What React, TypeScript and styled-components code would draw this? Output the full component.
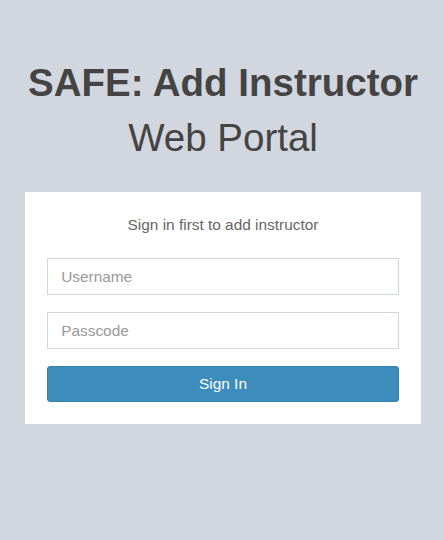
import React from "react";
import styled, { createGlobalStyle } from "styled-components";

const GlobalStyle = createGlobalStyle`
  html, body {
    margin: 0;
    padding: 0;
    background: #d2d6de;
    font-family: "Liberation Sans", Arial, Helvetica, sans-serif;
  }
  * { box-sizing: border-box; }
`;

const Page = styled.div`
  min-height: 540px;
  background: #d2d6de;
  padding: 54.5px 0 0 2px;
`;

const LoginBox = styled.div`
  width: 396px;
  margin: 0 auto;
`;

const Logo = styled.div`
  font-size: 38.5px;
  line-height: 55px;
  text-align: center;
  color: #444;
  margin-bottom: 27.5px;
  font-weight: 400;
`;

const LogoStrong = styled.b`
  font-weight: 700;
`;

const Card = styled.div`
  background: #fff;
  padding: 22px;
  color: #666;
`;

const Message = styled.p`
  margin: 0;
  padding: 0 22px 22px;
  text-align: center;
  font-size: 15.4px;
  line-height: 22px;
  color: #666;
`;

const FormGroup = styled.div`
  margin-bottom: 16.5px;
`;

const Input = styled.input`
  display: block;
  width: 100%;
  height: 37.4px;
  padding: 6.6px 13.2px;
  font-family: "Liberation Sans", Arial, Helvetica, sans-serif;
  font-size: 15.4px;
  line-height: 22px;
  color: #555;
  background: #fff;
  border: 1px solid #d2d6de;
  border-radius: 0;
  outline: none;
  &::placeholder {
    color: #999;
    opacity: 1;
  }
`;

const Button = styled.button`
  display: block;
  width: 100%;
  height: 36px;
  padding: 0 13px;
  font-family: "Liberation Sans", Arial, Helvetica, sans-serif;
  font-size: 15.4px;
  line-height: 22px;
  color: #fff;
  background: #3c8dbc;
  border: 1px solid #367fa9;
  border-radius: 3px;
  cursor: pointer;
`;

export default function App() {
  return (
    <>
      <GlobalStyle />
      <Page>
        <LoginBox>
          <Logo>
            <LogoStrong>SAFE: Add Instructor</LogoStrong>
            <br />
            Web Portal
          </Logo>
          <Card>
            <Message>Sign in first to add instructor</Message>
            <form onSubmit={(e) => e.preventDefault()}>
              <FormGroup>
                <Input type="text" placeholder="Username" />
              </FormGroup>
              <FormGroup>
                <Input type="password" placeholder="Passcode" />
              </FormGroup>
              <Button type="submit">Sign In</Button>
            </form>
          </Card>
        </LoginBox>
      </Page>
    </>
  );
}
